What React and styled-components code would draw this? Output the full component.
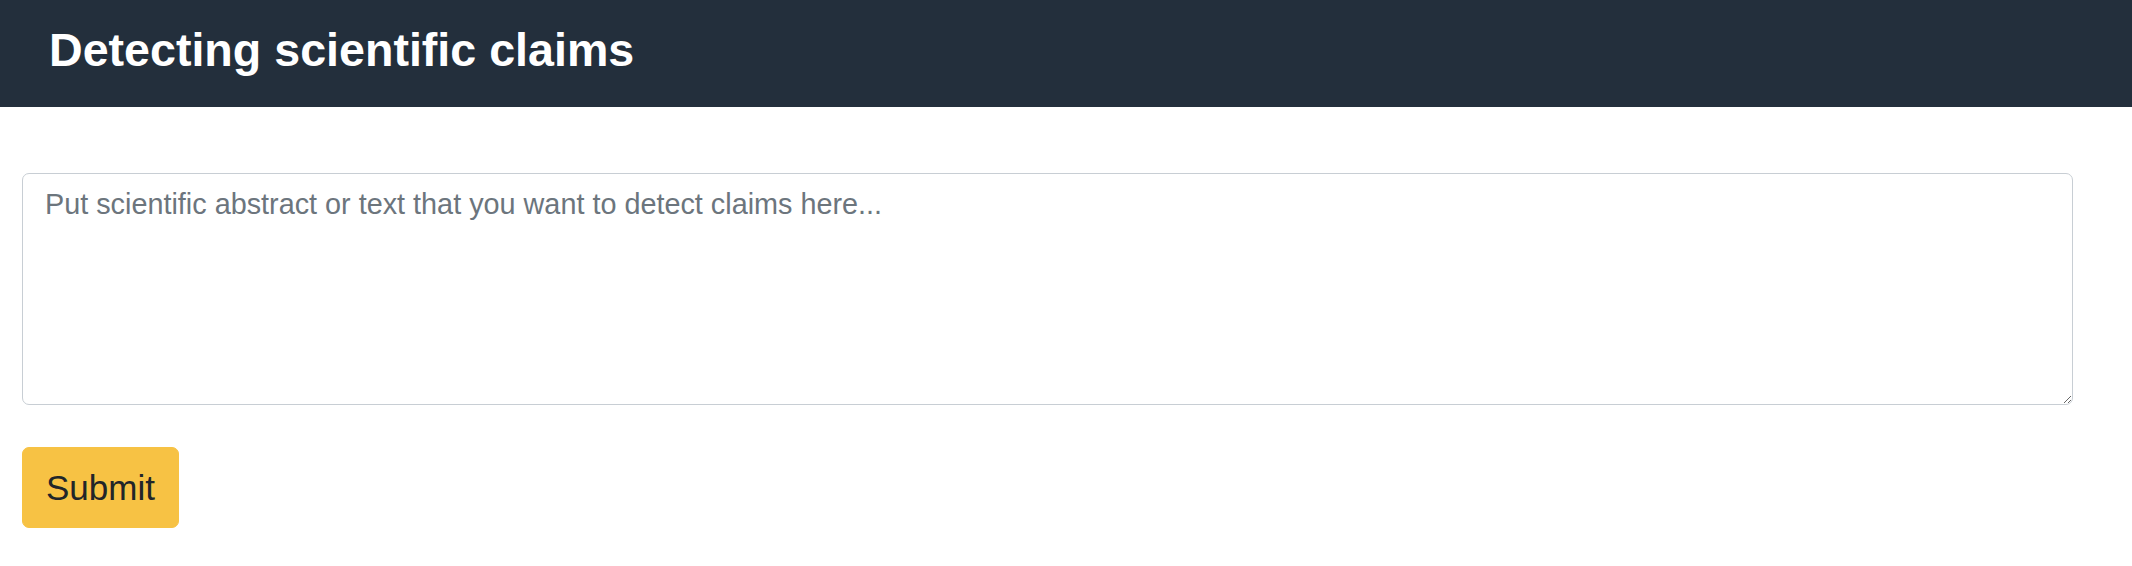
import React, { useState } from 'react';
import styled, { createGlobalStyle } from 'styled-components';

const GlobalStyle = createGlobalStyle`
  html, body {
    margin: 0;
    padding: 0;
    background-color: #ffffff;
    font-family: 'Liberation Sans', Arial, sans-serif;
    color: #212529;
  }

  * {
    box-sizing: border-box;
  }
`;

const Header = styled.header`
  height: 107px;
  background-color: #232f3c;
  padding: 23px 49px 0;
`;

const Title = styled.h1`
  margin: 0;
  font-family: 'Liberation Sans', Arial, sans-serif;
  font-weight: 700;
  font-size: 46.6px;
  line-height: 1.2;
  color: #ffffff;
`;

const Main = styled.main`
  padding: 66px 59px 0 22px;
  display: flex;
  flex-direction: column;
  align-items: flex-start;
  gap: 42px;
`;

const ClaimInput = styled.textarea`
  display: block;
  width: 100%;
  height: 232px;
  margin: 0;
  padding: 9px 22px;
  border: 1px solid #c8ced4;
  border-radius: 7px;
  font-family: 'Liberation Sans', Arial, sans-serif;
  font-size: 28.8px;
  line-height: 1.5;
  color: #495057;
  background-color: #ffffff;
  outline: none;

  &::placeholder {
    color: #6c757d;
    opacity: 1;
  }
`;

const SubmitButton = styled.button`
  margin: 0;
  padding: 14px 23px 12px;
  border: 1px solid #f7c244;
  border-radius: 7px;
  background-color: #f7c244;
  font-family: 'Liberation Sans', Arial, sans-serif;
  font-size: 35px;
  line-height: 1.5;
  color: #212529;
  cursor: pointer;
`;

const App = () => {
  const [text, setText] = useState('');

  return (
    <React.Fragment>
      <GlobalStyle />
      <Header>
        <Title>Detecting scientific claims</Title>
      </Header>
      <Main>
        <ClaimInput
          value={text}
          onChange={(event) => {
            setText(event.target.value);
          }}
          placeholder="Put scientific abstract or text that you want to detect claims here..."
        />
        <SubmitButton type="button">Submit</SubmitButton>
      </Main>
    </React.Fragment>
  );
};

export default App;
